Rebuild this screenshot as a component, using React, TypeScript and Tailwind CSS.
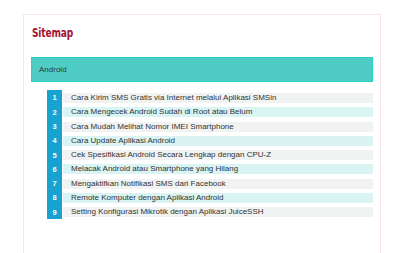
const posts = [
  "Cara Kirim SMS Gratis via Internet melalui Aplikasi SMSin",
  "Cara Mengecek Android Sudah di Root atau Belum",
  "Cara Mudah Melihat Nomor IMEI Smartphone",
  "Cara Update Aplikasi Android",
  "Cek Spesifikasi Android Secara Lengkap dengan CPU-Z",
  "Melacak Android atau Smartphone yang Hilang",
  "Mengaktifkan Notifikasi SMS dari Facebook",
  "Remote Komputer dengan Aplikasi Android",
  "Setting Konfigurasi Mikrotik dengan Aplikasi JuiceSSH",
];

export default function App() {
  return (
    <div className="w-[400px] h-[253px] overflow-hidden bg-white pt-[14px] pl-[23px]">
      <div className="w-[358px] h-[260px] border border-[#f6e4ea] px-[7px]">
        <h2 className="mt-[10px] ml-[1px] h-[23px] text-[12px] leading-[16px] font-bold text-[#a3122f] tracking-[-0.2px] origin-left scale-x-[0.84] [font-family:'DejaVu_Sans_Condensed','Liberation_Sans_Narrow',sans-serif]">
          Sitemap
        </h2>
        <div className="mt-[9px] h-[25px] bg-[#4fcdc4] border border-[#22d2c5] flex items-center pl-[7px] text-[8px] text-[#2a3a38] [font-family:'Liberation_Sans',Arial,sans-serif]">
          Android
        </div>
        <div className="mt-[8px] ml-[16px] flex">
          <div className="w-[15px] bg-[#17a2cf] pt-[3px] pb-[2px] flex flex-col gap-[4.3px]">
            {posts.map((_, i) => (
              <div
                key={i}
                className="h-[10px] flex items-center justify-center text-white text-[7.5px] font-bold [font-family:'Liberation_Sans',Arial,sans-serif]"
              >
                {i + 1}
              </div>
            ))}
          </div>
          <ul className="flex-1 ml-[1px] pt-[3px] flex flex-col gap-[4.3px]">
            {posts.map((title, i) => (
              <li
                key={title}
                className={`h-[10px] flex items-center pl-[8px] text-[8px] text-[#333333] [font-family:'Liberation_Sans',Arial,sans-serif] ${
                  i % 2 === 0 ? "bg-[#f1f2f2]" : "bg-[#d9f4f3]"
                }`}
              >
                {title}
              </li>
            ))}
          </ul>
        </div>
      </div>
    </div>
  );
}
